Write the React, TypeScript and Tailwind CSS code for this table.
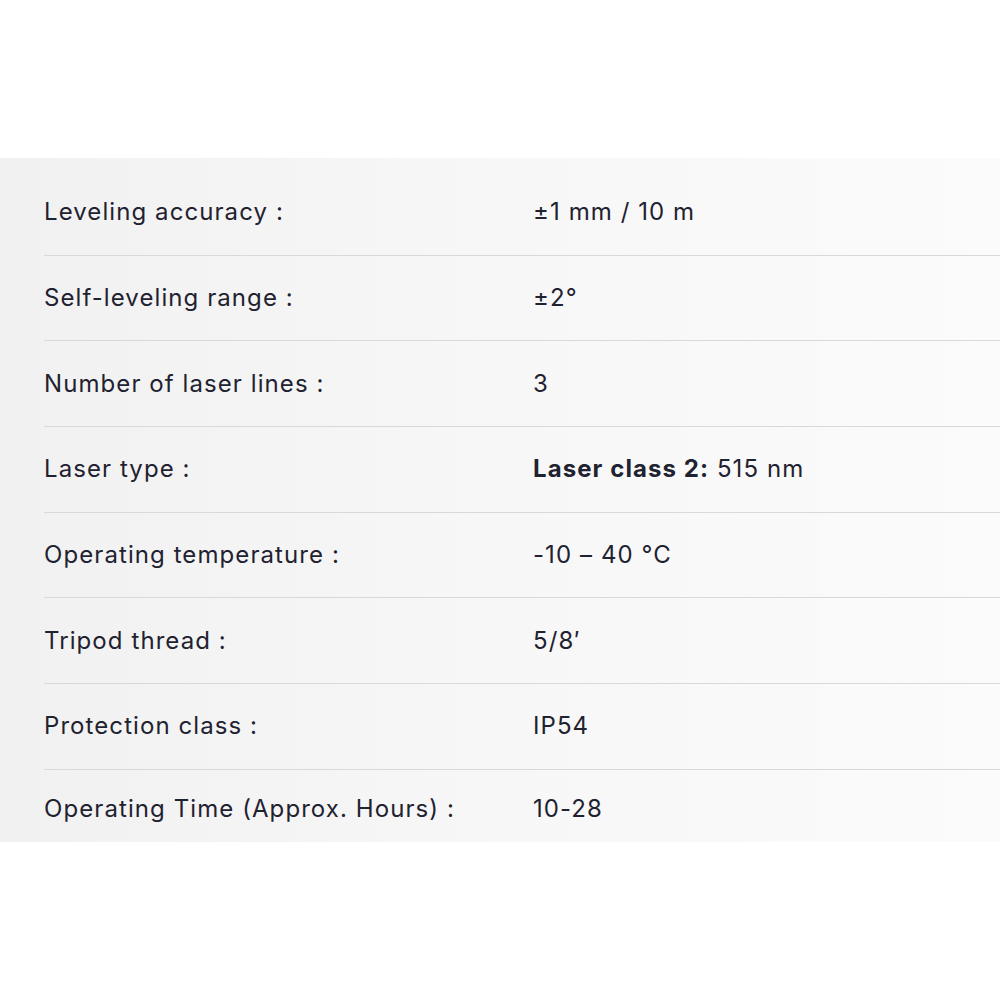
const specs: { label: string; value: React.ReactNode }[] = [
  { label: 'Leveling accuracy :', value: '±1 mm / 10 m' },
  { label: 'Self-leveling range :', value: '±2°' },
  { label: 'Number of laser lines :', value: '3' },
  {
    label: 'Laser type :',
    value: (
      <>
        <span className="font-bold">Laser class 2:</span> 515 nm
      </>
    ),
  },
  { label: 'Operating temperature :', value: '-10 – 40 °C' },
  { label: 'Tripod thread :', value: '5/8′' },
  { label: 'Protection class :', value: 'IP54' },
  { label: 'Operating Time (Approx. Hours) :', value: '10-28' },
];

export default function App() {
  return (
    <div className="min-h-[1000px] bg-white pt-[158px] font-['Inter',sans-serif] text-[#1f2230]">
      <div className="bg-gradient-to-r from-[#f1f1f1] via-[#f7f7f7] to-[#fbfbfb] pl-[44px] pt-[12px]">
        {specs.map((s, i) =>
          i < specs.length - 1 ? (
            <div
              key={s.label}
              className="flex h-[85.67px] items-center border-b border-[#d9d9d9] text-[24px] tracking-[0.045em]"
            >
              <div className="w-[489px]">{s.label}</div>
              <div>{s.value}</div>
            </div>
          ) : (
            <div
              key={s.label}
              className="flex h-[72px] items-center pt-[6px] text-[24px] tracking-[0.045em]"
            >
              <div className="w-[489px]">{s.label}</div>
              <div>{s.value}</div>
            </div>
          )
        )}
      </div>
    </div>
  );
}
